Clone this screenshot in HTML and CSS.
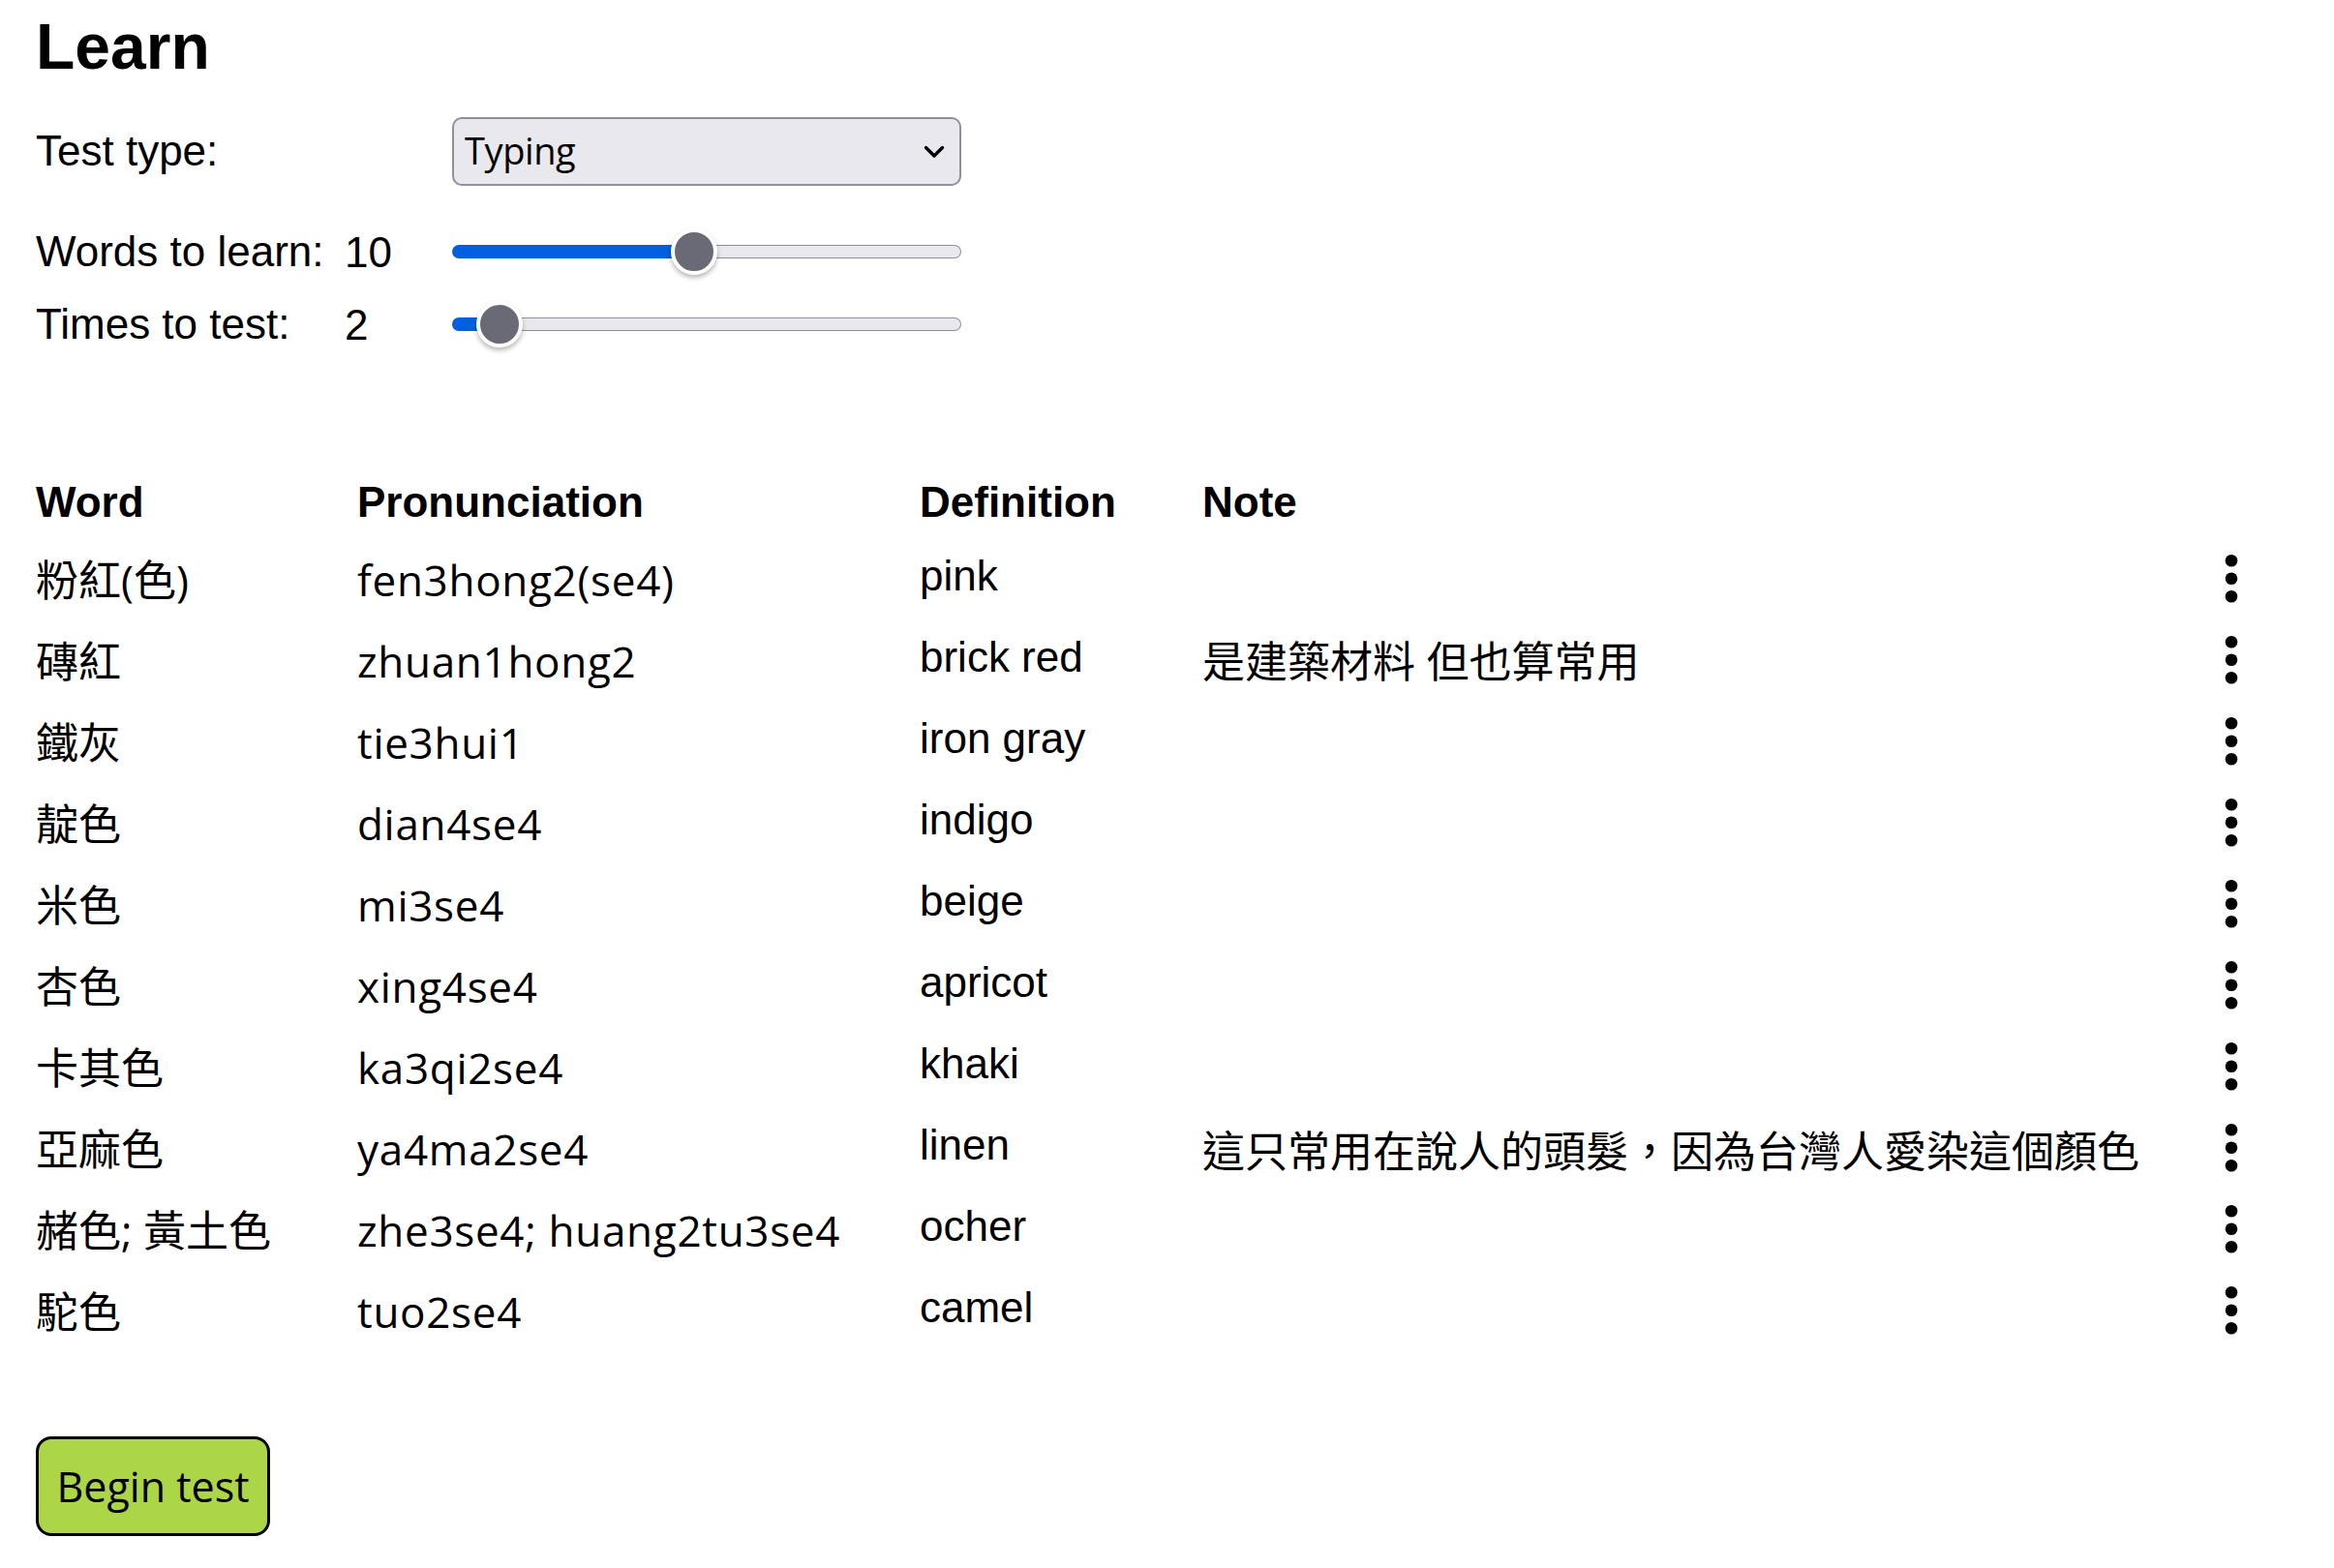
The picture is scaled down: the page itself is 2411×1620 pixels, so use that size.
FILE: index.html
```html
<!DOCTYPE html>
<html lang="en">
<head>
<meta charset="utf-8">
<title>Learn</title>
<link rel="stylesheet" href="styles.css">
</head>
<body>
<main class="page">
  <h1 class="title">Learn</h1>

  <div class="settings">
    <label class="label label-wide" for="test-type">Test type:</label>
    <div class="select-wrap">
      <select id="test-type" class="select">
        <option>Typing</option>
        <option>Multiple choice</option>
      </select>
      <svg class="chevron" width="22" height="14" viewBox="0 0 22 14" aria-hidden="true">
        <path d="M2.5 2.5 L11 11 L19.5 2.5" fill="none" stroke="#000" stroke-width="3.4" stroke-linecap="round" stroke-linejoin="round"/>
      </svg>
    </div>

    <label class="label label-slider">Words to learn:</label>
    <span class="value">10</span>
    <div class="slider" style="--p:0.4737">
      <div class="track">
        <div class="fill"></div>
        <div class="rest"></div>
      </div>
      <div class="thumb"></div>
    </div>

    <label class="label label-slider">Times to test:</label>
    <span class="value">2</span>
    <div class="slider" style="--p:0.0526">
      <div class="track">
        <div class="fill"></div>
        <div class="rest"></div>
      </div>
      <div class="thumb"></div>
    </div>
  </div>

  <div class="words" role="table">
    <div class="row head" role="row">
      <div class="th">Word</div>
      <div class="th">Pronunciation</div>
      <div class="th">Definition</div>
      <div class="th">Note</div>
      <div class="th"></div>
    </div>

    <div class="row" role="row">
      <div class="cell zh" lang="zh-TW">粉紅(色)</div>
      <div class="cell zh pron">fen3hong2(se4)</div>
      <div class="cell def">pink</div>
      <div class="cell zh" lang="zh-TW"></div>
      <div class="cell menu"><button class="more" aria-label="More"><svg width="14" height="56" viewBox="0 0 14 56"><circle cx="7" cy="9.25" r="6.3"/><circle cx="7" cy="27.75" r="6.3"/><circle cx="7" cy="46.25" r="6.3"/></svg></button></div>
    </div>

    <div class="row" role="row">
      <div class="cell zh" lang="zh-TW">磚紅</div>
      <div class="cell zh pron">zhuan1hong2</div>
      <div class="cell def">brick red</div>
      <div class="cell zh" lang="zh-TW">是建築材料 但也算常用</div>
      <div class="cell menu"><button class="more" aria-label="More"><svg width="14" height="56" viewBox="0 0 14 56"><circle cx="7" cy="9.25" r="6.3"/><circle cx="7" cy="27.75" r="6.3"/><circle cx="7" cy="46.25" r="6.3"/></svg></button></div>
    </div>

    <div class="row" role="row">
      <div class="cell zh" lang="zh-TW">鐵灰</div>
      <div class="cell zh pron">tie3hui1</div>
      <div class="cell def">iron gray</div>
      <div class="cell zh" lang="zh-TW"></div>
      <div class="cell menu"><button class="more" aria-label="More"><svg width="14" height="56" viewBox="0 0 14 56"><circle cx="7" cy="9.25" r="6.3"/><circle cx="7" cy="27.75" r="6.3"/><circle cx="7" cy="46.25" r="6.3"/></svg></button></div>
    </div>

    <div class="row" role="row">
      <div class="cell zh" lang="zh-TW">靛色</div>
      <div class="cell zh pron">dian4se4</div>
      <div class="cell def">indigo</div>
      <div class="cell zh" lang="zh-TW"></div>
      <div class="cell menu"><button class="more" aria-label="More"><svg width="14" height="56" viewBox="0 0 14 56"><circle cx="7" cy="9.25" r="6.3"/><circle cx="7" cy="27.75" r="6.3"/><circle cx="7" cy="46.25" r="6.3"/></svg></button></div>
    </div>

    <div class="row" role="row">
      <div class="cell zh" lang="zh-TW">米色</div>
      <div class="cell zh pron">mi3se4</div>
      <div class="cell def">beige</div>
      <div class="cell zh" lang="zh-TW"></div>
      <div class="cell menu"><button class="more" aria-label="More"><svg width="14" height="56" viewBox="0 0 14 56"><circle cx="7" cy="9.25" r="6.3"/><circle cx="7" cy="27.75" r="6.3"/><circle cx="7" cy="46.25" r="6.3"/></svg></button></div>
    </div>

    <div class="row" role="row">
      <div class="cell zh" lang="zh-TW">杏色</div>
      <div class="cell zh pron">xing4se4</div>
      <div class="cell def">apricot</div>
      <div class="cell zh" lang="zh-TW"></div>
      <div class="cell menu"><button class="more" aria-label="More"><svg width="14" height="56" viewBox="0 0 14 56"><circle cx="7" cy="9.25" r="6.3"/><circle cx="7" cy="27.75" r="6.3"/><circle cx="7" cy="46.25" r="6.3"/></svg></button></div>
    </div>

    <div class="row" role="row">
      <div class="cell zh" lang="zh-TW">卡其色</div>
      <div class="cell zh pron">ka3qi2se4</div>
      <div class="cell def">khaki</div>
      <div class="cell zh" lang="zh-TW"></div>
      <div class="cell menu"><button class="more" aria-label="More"><svg width="14" height="56" viewBox="0 0 14 56"><circle cx="7" cy="9.25" r="6.3"/><circle cx="7" cy="27.75" r="6.3"/><circle cx="7" cy="46.25" r="6.3"/></svg></button></div>
    </div>

    <div class="row" role="row">
      <div class="cell zh" lang="zh-TW">亞麻色</div>
      <div class="cell zh pron">ya4ma2se4</div>
      <div class="cell def">linen</div>
      <div class="cell zh" lang="zh-TW">這只常用在說人的頭髮<span class="punct">，</span>因為台灣人愛染這個顏色</div>
      <div class="cell menu"><button class="more" aria-label="More"><svg width="14" height="56" viewBox="0 0 14 56"><circle cx="7" cy="9.25" r="6.3"/><circle cx="7" cy="27.75" r="6.3"/><circle cx="7" cy="46.25" r="6.3"/></svg></button></div>
    </div>

    <div class="row" role="row">
      <div class="cell zh" lang="zh-TW">赭色; 黃土色</div>
      <div class="cell zh pron">zhe3se4; huang2tu3se4</div>
      <div class="cell def">ocher</div>
      <div class="cell zh" lang="zh-TW"></div>
      <div class="cell menu"><button class="more" aria-label="More"><svg width="14" height="56" viewBox="0 0 14 56"><circle cx="7" cy="9.25" r="6.3"/><circle cx="7" cy="27.75" r="6.3"/><circle cx="7" cy="46.25" r="6.3"/></svg></button></div>
    </div>

    <div class="row" role="row">
      <div class="cell zh" lang="zh-TW">駝色</div>
      <div class="cell zh pron">tuo2se4</div>
      <div class="cell def">camel</div>
      <div class="cell zh" lang="zh-TW"></div>
      <div class="cell menu"><button class="more" aria-label="More"><svg width="14" height="56" viewBox="0 0 14 56"><circle cx="7" cy="9.25" r="6.3"/><circle cx="7" cy="27.75" r="6.3"/><circle cx="7" cy="46.25" r="6.3"/></svg></button></div>
    </div>
  </div>

  <button class="begin">Begin test</button>
</main>
</body>
</html>
```

FILE: styles.css
```css
html, body {
  margin: 0;
  padding: 0;
  background: #fff;
  color: #000;
}

body {
  font-family: "Liberation Sans", Arial, sans-serif;
  font-size: 44px;
}

.page {
  padding: 15px 0 0 37px;
}

.title {
  margin: 0;
  font-family: "Liberation Sans", Arial, sans-serif;
  font-weight: bold;
  font-size: 66px;
  line-height: 66px;
}

/* ---------- settings ---------- */
.settings {
  margin-top: 40px;
  display: grid;
  grid-template-columns: 319px 111px 526px;
  grid-template-rows: 71px 92px 74.5px;
}

.label {
  font-size: 44px;
  line-height: 49px;
  align-self: end;
  white-space: nowrap;
}

.label-wide {
  grid-column: 1 / 3;
  line-height: 70px;
  align-self: stretch;
}

.value {
  font-size: 44px;
  line-height: 49px;
  height: 48px;
  align-self: end;
}

.select-wrap {
  position: relative;
  height: 71px;
}

.select {
  appearance: none;
  -webkit-appearance: none;
  width: 100%;
  height: 71px;
  margin: 0;
  box-sizing: border-box;
  border: 2px solid #8f8f9d;
  border-radius: 10px;
  background: #e9e9ed;
  color: #000;
  font-family: "Open Sans", "Noto Sans CJK TC", sans-serif;
  font-size: 38px;
  letter-spacing: -0.4px;
  padding: 0 0 3px 11px;
  outline: none;
}

.chevron {
  position: absolute;
  right: 17px;
  top: 29px;
  pointer-events: none;
}

.slider {
  position: relative;
  height: 48px;
  align-self: end;
  display: flex;
  align-items: center;
}

.track {
  display: flex;
  width: 100%;
  height: 14px;
}

.fill {
  width: calc(24px + (100% - 48px) * var(--p));
  height: 14px;
  background: #0060df;
  border-radius: 7px 0 0 7px;
}

.rest {
  flex: 1;
  box-sizing: border-box;
  height: 14px;
  background: #e9e9ed;
  border: 1.5px solid #8f8f9d;
  border-left: none;
  border-radius: 0 7px 7px 0;
}

.thumb {
  position: absolute;
  top: 0;
  left: calc((100% - 48px) * var(--p));
  width: 48px;
  height: 48px;
  box-sizing: border-box;
  border-radius: 50%;
  background: #6a6a76;
  border: 4.5px solid #fff;
  box-shadow: 0 3px 5px rgba(0, 0, 0, 0.28);
}

/* ---------- word table ---------- */
.words {
  margin-top: 135.25px;
  width: 2293px;
}

.row {
  display: grid;
  grid-template-columns: 332px 581px 292px 1038px 50px;
  height: 84px;
  align-items: start;
}

.row.head {
  height: 76.2px;
}

.th {
  font-family: "Liberation Sans", Arial, sans-serif;
  font-weight: bold;
  font-size: 44px;
  line-height: 48px;
  padding-top: 1px;
  white-space: nowrap;
}

.cell {
  white-space: nowrap;
}

.zh {
  font-family: "Open Sans", "Noto Sans CJK TC", sans-serif;
  font-size: 44px;
  line-height: 58px;
}

.pron {
  letter-spacing: 0.7px;
}

.punct {
  font-family: "Noto Sans CJK SC", "Noto Sans CJK TC", sans-serif;
}

.def {
  font-family: "Liberation Sans", Arial, sans-serif;
  font-size: 44px;
  line-height: 48px;
  padding-top: 1px;
}

.menu {
  display: flex;
  justify-content: center;
}

.more {
  margin: 0;
  padding: 0;
  border: none;
  background: none;
  display: block;
  line-height: 0;
}

.more svg {
  display: block;
  fill: #000;
}

/* ---------- button ---------- */
.begin {
  margin-top: 74px;
  display: block;
  width: 242px;
  height: 103px;
  box-sizing: border-box;
  padding: 0;
  border: 3px solid #000;
  border-radius: 16px;
  background: #acd548;
  color: #000;
  font-family: "Open Sans", "Noto Sans CJK TC", sans-serif;
  font-size: 43px;
  line-height: 1;
  text-align: center;
}
```
